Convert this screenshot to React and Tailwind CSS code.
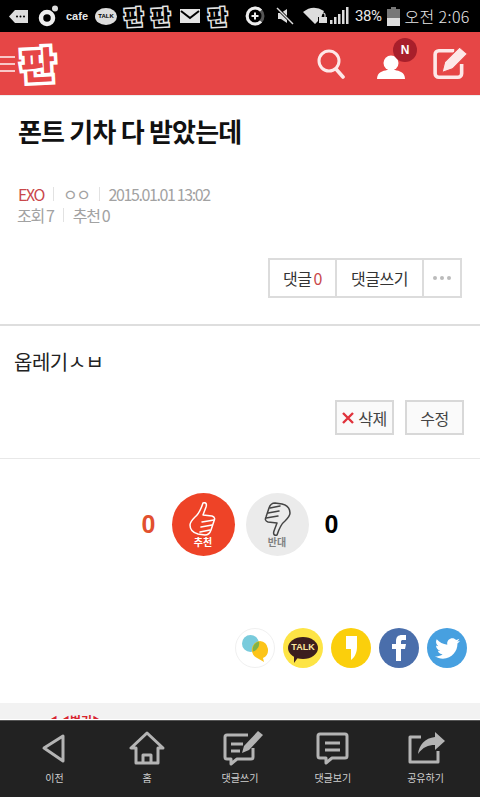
import React from 'react';
import { FaTwitter } from 'react-icons/fa';

const kr = { fontFamily: '"Noto Sans CJK KR", "Noto Sans", sans-serif' };

const PanLogo = ({ className }) => (
  <span
    style={{ ...kr, paintOrder: 'stroke fill' }}
    className={`inline-block font-black leading-none ${className}`}
  >
    판
  </span>
);

const StatusBar = () => (
  <div className="flex h-8 items-center bg-black pl-[9px] text-[#e8e8e8]" style={kr}>
    <svg width="19" height="13" viewBox="0 0 19 13" fill="#ddd">
      <path d="M6 0h13v13H6L0 6.5z" />
      <circle cx="8" cy="6.5" r="1" fill="#000" />
      <circle cx="11.5" cy="6.5" r="1" fill="#000" />
      <circle cx="15" cy="6.5" r="1" fill="#000" />
    </svg>
    <svg width="21" height="22" viewBox="0 0 21 22" className="ml-[10px]">
      <circle cx="9" cy="13" r="6" fill="none" stroke="#eee" strokeWidth="4.5" />
      <circle cx="17" cy="3.5" r="3" fill="#ddd" />
    </svg>
    <span className="ml-[7px] text-[11px] font-bold" style={{ fontFamily: '"Liberation Sans", sans-serif' }}>
      cafe
    </span>
    <div className="relative ml-[7px] flex h-[17px] w-[22px] items-center justify-center rounded-[50%] bg-[#ddd]">
      <span className="text-[6px] font-bold text-black" style={{ fontFamily: '"Liberation Sans", sans-serif' }}>
        TALK
      </span>
    </div>
    <PanLogo className="ml-[7px] -rotate-3 text-[21px] text-black [-webkit-text-stroke:3px_#e4e4e4]" />
    <PanLogo className="ml-[8px] -rotate-3 text-[21px] text-black [-webkit-text-stroke:3px_#e4e4e4]" />
    <svg width="20" height="14" viewBox="0 0 20 14" className="ml-[9px]">
      <rect width="20" height="14" fill="#e4e4e4" />
      <path d="M1 2l9 7 9-7" fill="none" stroke="#000" strokeWidth="2" />
    </svg>
    <PanLogo className="ml-[8px] -rotate-3 text-[21px] text-black [-webkit-text-stroke:3px_#e4e4e4]" />
    <svg width="20" height="20" viewBox="0 0 20 20" className="ml-[18px]">
      <circle cx="10" cy="10" r="8" fill="none" stroke="#555" strokeWidth="3" />
      <path d="M16 4.5A8 8 0 1 0 16 15.5" fill="none" stroke="#eee" strokeWidth="3" />
      <path d="M6.5 10h7M10 6.5v7" stroke="#eee" strokeWidth="2" />
    </svg>
    <svg width="18" height="18" viewBox="0 0 18 18" className="ml-[11px]">
      <path d="M2 6h3l6-4v14l-6-4H2z" fill="#ddd" />
      <path d="M1 1l16 16" stroke="#000" strokeWidth="3" />
      <path d="M1 1l16 16" stroke="#ddd" strokeWidth="1.5" />
    </svg>
    <svg width="25" height="18" viewBox="0 0 25 18" className="ml-[9px]">
      <path d="M0 5Q10-3 21 4L18 10H15v4l-3 3z" fill="#ddd" />
      <rect x="16" y="10" width="8" height="6" fill="#ddd" />
      <path d="M18 10V8a2 2 0 0 1 4 0v2" fill="none" stroke="#ddd" strokeWidth="1.2" />
    </svg>
    <svg width="20" height="18" viewBox="0 0 20 18" fill="#ddd" className="ml-[2px]">
      <rect x="0" y="13" width="2.5" height="4" />
      <rect x="4" y="10" width="2.5" height="7" />
      <rect x="8" y="7" width="2.5" height="10" />
      <rect x="12" y="3" width="2.5" height="14" />
      <rect x="16" y="0" width="2.5" height="17" />
    </svg>
    <span className="ml-[5px] text-[15px] tracking-[-0.5px]" style={{ fontFamily: '"Roboto", sans-serif' }}>38%</span>
    <svg width="13" height="19" viewBox="0 0 13 19" className="ml-[6px]">
      <rect x="4" y="0" width="5" height="2" fill="#777" />
      <rect x="0" y="2" width="13" height="17" fill="#777" />
      <rect x="0" y="11" width="13" height="8" fill="#ddd" />
    </svg>
    <span className="ml-[4px] text-[16px] whitespace-nowrap font-light tracking-[0.4px]">오전 2:06</span>
  </div>
);

const Header = () => (
  <div className="flex h-[64px] items-center border-b border-[#eeeeee] bg-[#e64646]">
    <div className="flex w-[15px] flex-col gap-[5px]">
      <div className="h-[2px] bg-[#f8c8c8]" />
      <div className="h-[2px] bg-[#f8c8c8]" />
      <div className="h-[2px] bg-[#f8c8c8]" />
    </div>
    <PanLogo className="ml-[6px] -rotate-3 text-[37px] text-[#e64646] [-webkit-text-stroke:7px_#ffffff]" />
    <svg width="28" height="32" viewBox="0 0 28 32" className="ml-auto" fill="none" stroke="#fde8e8" strokeWidth="3">
      <circle cx="12" cy="13" r="10" />
      <path d="M19 21l7 8" strokeWidth="3.6" strokeLinecap="round" />
    </svg>
    <div className="relative ml-[32px] h-[36px] w-[28px]">
      <svg width="28" height="30" viewBox="0 0 28 30" fill="#ffffff" className="absolute bottom-[1px] left-0">
        <circle cx="14" cy="12" r="7.5" />
        <path d="M0 28c0-7 6-8 10-9h8c4 1 10 2 10 9z" />
      </svg>
      <div className="absolute -top-[8px] left-[16px] flex h-[24px] w-[24px] items-center justify-center rounded-full bg-[#a81f2b] text-[12px] font-bold text-white" style={{ fontFamily: '"Liberation Sans", sans-serif' }}>
        N
      </div>
    </div>
    <svg width="35" height="35" viewBox="0 0 33 33" className="ml-[28px] mr-[12px]">
      <path d="M27 17v9a3.500 3.500 0 0 1-3.500 3.500H5.500A3.500 3.500 0 0 1 2 26V8a3.500 3.500 0 0 1 3.500-3.500H20" fill="none" stroke="#fde8e8" strokeWidth="3.4" />
      <path d="M25 1l7.500 6.500-14 14-10 3.500 2.500-10z" fill="#fde8e8" stroke="#e64646" strokeWidth="1" />
    </svg>
  </div>
);

const ThumbHand = ({ color, down }) => (
  <svg
    width="28"
    height="34"
    viewBox="0 0 28 34"
    fill="none"
    stroke={color}
    strokeWidth="1.5"
    strokeLinecap="round"
    strokeLinejoin="round"
    className={down ? 'rotate-180' : ''}
  >
    <path d="M14 1c3-1 4 1 3 4l-3 8 9 1c3 1 3 3 2 5l-3 9c-1 3-3 5-6 5l-7-1c-4-1-8-4-8-9 0-3 2-5 5-8 4-3 6-8 8-14z" />
    <path d="M13 20l12-2M12 25l11-2M11 30l10-2" />
  </svg>
);

const ShareIcons = () => (
  <div className="flex items-center justify-end gap-[8px] pr-[13px]">
    <div className="flex h-[40px] w-[40px] items-center justify-center rounded-full border border-[#f0f0f0] bg-white">
      <svg width="32" height="32" viewBox="0 0 32 32">
        <circle cx="11.5" cy="11.5" r="8.5" fill="#79cbdc" />
        <path d="M21 9a9 9 0 0 1 3 17l1 4-6-3.500a9 9 0 0 1 2-17.500z" fill="#fcc419" />
        <path d="M14 19.500a8.500 8.500 0 0 0 6-10 8 8 0 0 0-6 10z" fill="#7fb24a" />
      </svg>
    </div>
    <div className="flex h-[40px] w-[40px] items-center justify-center rounded-full bg-[#fde445]">
      <div className="relative flex h-[22px] w-[30px] items-center justify-center rounded-[50%] bg-[#3c1e1e]">
        <span className="text-[9px] font-bold text-[#fde9a0]" style={{ fontFamily: '"Liberation Sans", sans-serif' }}>TALK</span>
        <div className="absolute -bottom-[4px] left-[6px] h-0 w-0 border-t-[7px] border-r-[5px] border-t-[#3c1e1e] border-r-transparent" />
      </div>
    </div>
    <div className="flex h-[40px] w-[40px] items-center justify-center rounded-full bg-[#fbcf0c]">
      <svg width="11" height="24" viewBox="0 0 11 24" fill="#fff">
        <path d="M0 0h11v11c0 5-2 10-6 13v-11H0z" />
      </svg>
    </div>
    <div className="flex h-[40px] w-[40px] items-center justify-center rounded-full bg-[#4a6eab]">
      <svg width="14" height="26" viewBox="0 0 14 26" fill="#fff">
        <path d="M4 26V14H0V9h4V6c0-4 2-6 6-6h4v5h-3c-1.500 0-2 .5-2 2v2h5l-1 5H9v12z" />
      </svg>
    </div>
    <div className="flex h-[40px] w-[40px] items-center justify-center rounded-full bg-[#47a0e0] text-[25px] text-white">
      <FaTwitter />
    </div>
  </div>
);

const NAV_STROKE = '#b4b4b4';

const NavItem = ({ label, children }) => (
  <div className="flex flex-1 flex-col items-center">
    <div className="flex h-[38px] items-center justify-center">{children}</div>
    <span className="mt-[6px] text-[10px] leading-none text-[#d0d0d0]">{label}</span>
  </div>
);

const BottomNav = () => (
  <div className="flex h-[77px] border-t border-[#555] bg-[#222222] px-2 pt-[8px]" style={kr}>
    <NavItem label="이전">
      <svg width="26" height="30" viewBox="0 0 26 30" fill="none" stroke={NAV_STROKE} strokeWidth="3" strokeLinejoin="round">
        <path d="M22 3v25L3 15z" />
      </svg>
    </NavItem>
    <NavItem label="홈">
      <svg width="36" height="34" viewBox="0 0 36 34" fill="none" stroke={NAV_STROKE} strokeWidth="3" strokeLinejoin="round">
        <path d="M18 2L2 17h5v15h22V17h5z" />
        <path d="M14 32v-8h8v8" />
      </svg>
    </NavItem>
    <NavItem label="댓글쓰기">
      <svg width="42" height="36" viewBox="0 0 42 36" fill="none" stroke={NAV_STROKE} strokeWidth="3" strokeLinejoin="round" className="ml-[6px]">
        <path d="M26 5H5a2 2 0 0 0-2 2v20a2 2 0 0 0 2 2h4v5l6-5h14a2 2 0 0 0 2-2v-9" />
        <path d="M9 14h12M9 21h9" />
        <path d="M36 1l5 4-14 15-7 3 2-7z" fill={NAV_STROKE} stroke="none" />
      </svg>
    </NavItem>
    <NavItem label="댓글보기">
      <svg width="33" height="33" viewBox="0 0 33 33" fill="none" stroke={NAV_STROKE} strokeWidth="3" strokeLinejoin="round">
        <path d="M4 2h25a2 2 0 0 1 2 2v20a2 2 0 0 1-2 2H16l-6 5v-5H4a2 2 0 0 1-2-2V4a2 2 0 0 1 2-2z" />
        <path d="M9 11h15M9 18h15" />
      </svg>
    </NavItem>
    <NavItem label="공유하기">
      <svg width="38" height="32" viewBox="0 0 38 32" fill="none" stroke={NAV_STROKE} strokeWidth="3" strokeLinejoin="round">
        <path d="M14 5H3v25h28V19" />
        <path d="M28 0l10 9-10 9v-5c-7 0-12 2-17 9 1-9 7-16 17-17z" fill={NAV_STROKE} stroke="none" />
      </svg>
    </NavItem>
  </div>
);

export default function App() {
  return (
    <div className="flex h-[797px] w-[480px] flex-col overflow-hidden bg-white" style={kr}>
      <StatusBar />
      <Header />

      <div className="flex-1">
        <h1 className="mt-[15px] ml-[18px] text-[26px] leading-[40px] font-bold tracking-[-0.8px] text-[#111]">
          폰트 기차 다 받았는데
        </h1>

        <div className="mt-[33px] ml-[18px] flex h-[20px] items-center text-[16px] leading-none tracking-[-1.4px] text-[#a2a2a2]">
          <span className="text-[#c9474b]">EXO</span>
          <span className="mx-[9px] h-[14px] w-px bg-[#e2e2e2]" />
          <span>ㅇㅇ</span>
          <span className="mx-[9px] h-[14px] w-px bg-[#e2e2e2]" />
          <span>2015.01.01 13:02</span>
        </div>
        <div className="mt-[1px] ml-[17px] flex h-[20px] items-center text-[16px] leading-none tracking-[-1.3px] text-[#a2a2a2]">
          <span>조회 7</span>
          <span className="mx-[9px] h-[14px] w-px bg-[#e2e2e2]" />
          <span>추천 0</span>
        </div>

        <div className="mt-[33px] mr-[18px] flex justify-end">
          <div className="flex h-[40px] border-2 border-[#dcdcdc] text-[16px] tracking-[-0.5px] text-[#333]">
            <div className="flex w-[67px] items-center justify-center border-r-2 border-[#dcdcdc]">
              댓글<span className="ml-[2px] text-[#c9474b]">0</span>
            </div>
            <div className="flex w-[87px] items-center justify-center border-r-2 border-[#dcdcdc]">댓글쓰기</div>
            <div className="flex w-[36px] items-center justify-center gap-[3px]">
              <span className="h-[4px] w-[4px] rounded-full bg-[#bbb]" />
              <span className="h-[4px] w-[4px] rounded-full bg-[#bbb]" />
              <span className="h-[4px] w-[4px] rounded-full bg-[#bbb]" />
            </div>
          </div>
        </div>

        <div className="mt-[26px] h-[2px] bg-[#dedede]" />

        <p className="mt-[21px] ml-[14px] text-[20px] leading-[30px] tracking-[-0.5px] text-[#222]">옵레기ㅅㅂ</p>

        <div className="mt-[23px] mr-[16px] flex justify-end gap-[11px] text-[16px] tracking-[-0.5px] text-[#444]">
          <div className="flex h-[35px] w-[59px] items-center justify-center gap-[4px] border-2 border-[#d8d8d8] bg-[#fafafa]">
            <svg width="12" height="12" viewBox="0 0 12 12" stroke="#e0333c" strokeWidth="2.4">
              <path d="M1 1l10 10M11 1L1 11" />
            </svg>
            삭제
          </div>
          <div className="flex h-[35px] w-[59px] items-center justify-center border-2 border-[#d8d8d8] bg-[#fafafa]">수정</div>
        </div>

        <div className="mt-[23px] h-px bg-[#e8e8e8]" />

        <div className="mt-[34px] flex items-center justify-center">
          <span className="w-[24px] text-center text-[25px] font-bold text-[#e2502f]" style={{ fontFamily: '"Liberation Sans", sans-serif' }}>0</span>
          <div className="ml-[11px] flex h-[63px] w-[63px] flex-col items-center justify-center rounded-full bg-[#ee4327]">
            <ThumbHand color="#fff" />
            <span className="mt-[1px] text-[10px] leading-none font-bold text-white">추천</span>
          </div>
          <div className="ml-[11px] flex h-[63px] w-[63px] flex-col items-center justify-center rounded-full bg-[#ebebeb]">
            <ThumbHand color="#444" down />
            <span className="mt-[1px] text-[10px] leading-none font-bold text-[#808080]">반대</span>
          </div>
          <span className="ml-[11px] w-[24px] text-center text-[25px] font-bold text-black" style={{ fontFamily: '"Liberation Sans", sans-serif' }}>0</span>
        </div>

        <div className="mt-[72px]">
          <ShareIcons />
        </div>

        <div className="mt-[35px] h-[17px] overflow-hidden border-b border-white bg-[#f2f2f2] pl-[46px] pt-[12px] text-[12px] leading-none font-bold text-[#d8242f]">
          ◀◀벌기▶
        </div>
      </div>

      <BottomNav />
    </div>
  );
}
